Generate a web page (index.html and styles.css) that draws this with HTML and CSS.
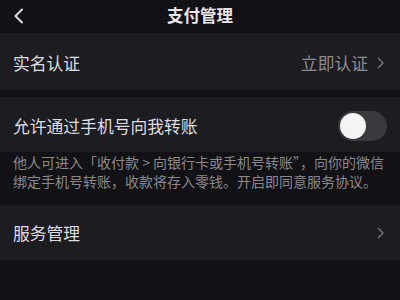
FILE: index.html
```html
<!DOCTYPE html>
<html lang="zh-CN">
<head>
<meta charset="utf-8">
<link rel="stylesheet" href="styles.css">
</head>
<body>
<div class="nav">
  <div class="back">
    <svg width="12" height="16" viewBox="0 0 12 16"><path d="M9 1.5 L2.5 8 L9 14.5" fill="none" stroke="#dcdcdc" stroke-width="2" stroke-linecap="round" stroke-linejoin="round"/></svg>
  </div>
  <div class="title">支付管理</div>
  <div></div>
</div>
<div class="row row1">
  <span class="label">实名认证</span>
  <span class="right"><span class="value">立即认证</span>
    <svg class="chev" width="8" height="12" viewBox="0 0 8 12"><path d="M1.5 1.5 L6 6 L1.5 10.5" fill="none" stroke="#6f6e73" stroke-width="1.6" stroke-linecap="round" stroke-linejoin="round"/></svg>
  </span>
</div>
<div class="row row2">
  <span class="label">允许通过手机号向我转账</span>
  <span class="toggle"><span class="knob"></span></span>
</div>
<div class="desc"><span class="line">他人可进入「收付款 &gt; 向银行卡或手机号转账”，向你的微信</span><span class="line">绑定手机号转账，收款将存入零钱。开启即同意服务协议。</span></div>
<div class="row row3">
  <span class="label">服务管理</span>
  <svg class="chev" width="8" height="12" viewBox="0 0 8 12"><path d="M1.5 1.5 L6 6 L1.5 10.5" fill="none" stroke="#6f6e73" stroke-width="1.6" stroke-linecap="round" stroke-linejoin="round"/></svg>
</div>
</body>
</html>
```

FILE: styles.css
```css
html, body {
  margin: 0;
  padding: 0;
  background: #121116;
  font-family: "Noto Sans CJK SC", "Noto Sans", sans-serif;
  color: #dedde2;
  width: 400px;
  height: 300px;
  overflow: hidden;
}
.nav {
  height: 33px;
  display: grid;
  grid-template-columns: 1fr auto 1fr;
  align-items: center;
  padding: 0 0 4px 0;
  box-sizing: border-box;
}
.back {
  padding-left: 13px;
  display: flex;
  align-items: center;
  padding-top: 3px;
}
.title {
  font-size: 16.5px;
  font-weight: bold;
  color: #e6e5ea;
  line-height: 20px;
}
.row {
  background: #1d1c21;
  display: flex;
  align-items: center;
  justify-content: space-between;
  padding: 0 15px 0 13px;
  font-size: 16.8px;
}
.row1 {
  height: 57px;
  padding-top: 2px;
  box-sizing: border-box;
}
.row2 {
  height: 55px;
  margin-top: 7px;
  padding-top: 2px;
  padding-right: 13px;
  box-sizing: border-box;
}
.row3 {
  height: 55px;
  box-sizing: border-box;
}
.label {
  color: #dddce1;
}
.right {
  display: flex;
  align-items: center;
  gap: 9px;
}
.value {
  color: #8d8c91;
}
.chev {
  display: block;
}
.toggle {
  width: 49px;
  height: 30px;
  border-radius: 15px;
  background: #3a393e;
  display: flex;
  align-items: center;
  padding-left: 2px;
  box-sizing: border-box;
}
.knob {
  width: 26px;
  height: 26px;
  border-radius: 50%;
  background: #f4f4f4;
}
.desc {
  font-size: 14px;
  line-height: 19px;
  color: #8a898e;
  padding: 1px 0 14px 13px;
  height: 53px;
  box-sizing: border-box;
}
.line {
  display: block;
  white-space: nowrap;
}
```
